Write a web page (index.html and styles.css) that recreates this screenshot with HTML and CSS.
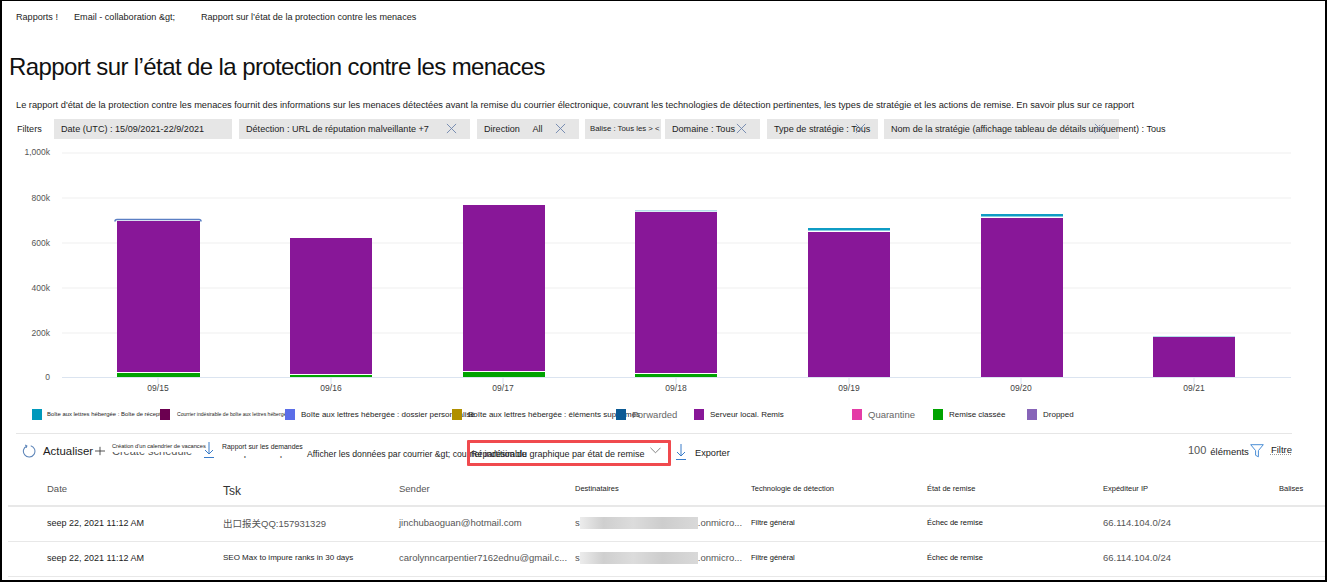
FILE: index.html
```html
<!DOCTYPE html>
<html lang="fr">
<head>
    <meta charset="UTF-8">
    <meta name="viewport" content="width=device-width, initial-scale=1.0">
    <title>Rapport sur l'état de la protection contre les menaces</title>
    <link rel="stylesheet" href="styles.css">
</head>
<body>
<div class="page">

    <div class="crumbs">
        <span class="crumb-a">Rapports !</span>
        <span class="crumb-b">Email - collaboration &amp;gt;</span>
        <span>Rapport sur l’état de la protection contre les menaces</span>
    </div>

    <h1 class="title">Rapport sur l’état de la protection contre les menaces</h1>

    <p class="intro">Le rapport d'état de la protection contre les menaces fournit des informations sur les menaces détectées avant la remise du courrier électronique, couvrant les technologies de détection pertinentes, les types de stratégie et les actions de remise. En savoir plus sur ce rapport</p>

    <div class="filters">
        <span class="filters-label">Filters</span>
        <div class="chip chip-date">Date (UTC) : 15/09/2021-22/9/2021</div>
        <div class="chip chip-detect">Détection : URL de réputation malveillante +7
            <svg class="x x-detect" viewBox="0 0 12 12"><path d="M1 1l10 10M11 1L1 11"/></svg></div>
        <div class="chip chip-dir">Direction <span class="dir-all">All</span>
            <svg class="x x-dir" viewBox="0 0 12 12"><path d="M1 1l10 10M11 1L1 11"/></svg></div>
        <div class="chip chip-tag">Balise : Tous les &gt; &lt;</div>
        <div class="chip chip-domain">Domaine : Tous
            <svg class="x x-domain" viewBox="0 0 12 12"><path d="M1 1l10 10M11 1L1 11"/></svg></div>
        <div class="chip chip-type">Type de stratégie : Tous
            <svg class="x x-type" viewBox="0 0 12 12"><path d="M1 1l10 10M11 1L1 11"/></svg></div>
        <div class="chip chip-name">Nom de la stratégie (affichage tableau de détails uniquement) : Tous
            <svg class="x x-name" viewBox="0 0 12 12"><path d="M1 1l10 10M11 1L1 11"/></svg></div>
    </div>

    <svg class="chart" viewBox="0 144 1327 254" width="1327" height="254">
        <g class="grid">
            <path d="M62 153H1291M62 198H1291M62 243H1291M62 288H1291M62 333H1291"/>
        </g>
        <path class="axis" d="M62 377.5H1291M158 378v6M331 378v6M503 378v6M676 378v6M849 378v6M1021 378v6M1194 378v6"/>

        <g class="ylabels">
            <text x="50" y="155">1,000k</text>
            <text x="50" y="201">800k</text>
            <text x="50" y="246">600k</text>
            <text x="50" y="291">400k</text>
            <text x="50" y="336">200k</text>
            <text x="50" y="380">0</text>
        </g>

        <!-- 09/15 -->
        <rect class="purple" x="117" y="221" width="83" height="151"/>
        <rect class="green" x="117" y="373" width="83" height="4"/>
        <path class="blue-cap" d="M115 221.5q0-2 2-2H199q2 0 2 2"/>
        <!-- 09/16 -->
        <rect class="purple" x="290" y="238" width="82" height="136"/>
        <rect class="green" x="290" y="375" width="82" height="2"/>
        <!-- 09/17 -->
        <rect class="purple" x="463" y="205" width="82" height="166"/>
        <rect class="green" x="463" y="372" width="82" height="5"/>
        <!-- 09/18 -->
        <rect class="pale" x="635" y="210" width="82" height="1.5"/>
        <rect class="purple" x="635" y="212" width="82" height="161"/>
        <rect class="green" x="635" y="374" width="82" height="3"/>
        <!-- 09/19 -->
        <rect class="teal" x="808" y="228" width="82" height="2.5"/>
        <rect class="purple" x="808" y="232" width="82" height="145"/>
        <!-- 09/20 -->
        <rect class="teal" x="981" y="214" width="82" height="2.5"/>
        <rect class="purple" x="981" y="218" width="82" height="159"/>
        <!-- 09/21 -->
        <rect class="pale" x="1153" y="336" width="82" height="1"/>
        <rect class="purple" x="1153" y="337" width="82" height="40"/>

        <g class="xlabels">
            <text x="158" y="391">09/15</text>
            <text x="331" y="391">09/16</text>
            <text x="503" y="391">09/17</text>
            <text x="676" y="391">09/18</text>
            <text x="849" y="391">09/19</text>
            <text x="1021" y="391">09/20</text>
            <text x="1194" y="391">09/21</text>
        </g>
    </svg>

    <div class="legend">
        <div class="leg"><i class="sw c1"></i><span class="tiny">Boîte aux lettres hébergée : Boîte de réception</span></div>
        <div class="leg"><i class="sw c2"></i><span class="tinier">Courrier indésirable de boîte aux lettres hébergée</span></div>
        <div class="leg"><i class="sw c3"></i><span class="mid">Boîte aux lettres hébergée : dossier personnalisé</span></div>
        <div class="leg"><i class="sw c4"></i><span class="mid">Boîte aux lettres hébergée : éléments supprimés</span></div>
        <div class="leg"><i class="sw c5"></i><span class="grey">Forwarded</span></div>
        <div class="leg"><i class="sw c6"></i><span class="mid">Serveur local. Remis</span></div>
        <div class="leg"><i class="sw c7"></i><span class="grey">Quarantine</span></div>
        <div class="leg"><i class="sw c8"></i><span class="mid">Remise classée</span></div>
        <div class="leg"><i class="sw c9"></i><span class="mid">Dropped</span></div>
    </div>

    <div class="toolbar">
        <div class="tool tool-refresh">
            <svg class="ico-refresh" viewBox="0 0 16 16"><path d="M5.5 2.2A6.6 6.6 0 1 0 10 1.9M3.6 1.2l2 1.1-.9 2.1"/></svg>
            <span>Actualiser</span>
        </div>
        <div class="tool tool-plus">
            <svg class="ico-plus" viewBox="0 0 12 12"><path d="M6 1v10M0 6h12"/></svg>
        </div>
        <div class="tool tool-sched">
            <span class="under">Create schedule</span>
            <span class="over">Création d'un calendrier de vacances</span>
        </div>
        <div class="tool tool-req">
            <svg class="ico-down" viewBox="0 0 10 16"><path d="M5 0v12M1 8l4 4 4-4M0 15.5h10"/></svg>
            <span class="under under-req">Request report</span>
            <span class="over over-req">Rapport sur les demandes</span>
        </div>
        <div class="tool tool-view">Afficher les données par courrier &amp;gt; courrier indésirable</div>
        <div class="breakdown">
            <span>Répartition du graphique par état de remise</span>
            <svg class="ico-chev" viewBox="0 0 12 7"><path d="M.5.5L6 6l5.5-5.5"/></svg>
        </div>
        <div class="tool tool-export">
            <svg class="ico-down" viewBox="0 0 10 16"><path d="M5 0v12M1 8l4 4 4-4M0 15.5h10"/></svg>
            <span>Exporter</span>
        </div>
        <div class="tool-right">
            <span class="count">100</span>
            <span class="count-label">éléments</span>
            <svg class="ico-funnel" viewBox="0 0 14 14"><path d="M.7.7h12.6L8.4 6.6v6.2l-2.8-1.5V6.6z"/></svg>
            <span class="filter-word">Filtre</span>
        </div>
    </div>

    <div class="table">
        <div class="row head">
            <div class="h-soft">Date</div>
            <div class="h-big">Tsk</div>
            <div class="h-soft">Sender</div>
            <div class="h-small">Destinataires</div>
            <div class="h-small">Technologie de détection</div>
            <div class="h-small">État de remise</div>
            <div class="h-small">Expéditeur IP</div>
            <div class="h-small">Balises</div>
        </div>
        <div class="row">
            <div>seep 22, 2021 11:12 AM</div>
            <div class="soft">出口报关QQ:157931329</div>
            <div class="soft">jinchubaoguan@hotmail.com</div>
            <div class="recip">s<span class="smudge"></span><span>.onmicro...</span></div>
            <div class="small">Filtre général</div>
            <div class="small">Échec de remise</div>
            <div class="soft">66.114.104.0/24</div>
            <div></div>
        </div>
        <div class="row">
            <div>seep 22, 2021 11:12 AM</div>
            <div class="subject">SEO Max to impure ranks in 30 days</div>
            <div class="soft">carolynncarpentier7162ednu@gmail.c...</div>
            <div class="recip">s<span class="smudge"></span><span>.onmicro...</span></div>
            <div class="small">Filtre général</div>
            <div class="small">Échec de remise</div>
            <div class="soft">66.114.104.0/24</div>
            <div></div>
        </div>
    </div>

</div>
</body>
</html>
```

FILE: styles.css
```css
body {
    margin: 0;
    background-color: #fff;
    font-family: "Liberation Sans", Arial, "Noto Sans CJK SC", sans-serif;
    color: #1c1c1c;
}

.page {
    box-sizing: border-box;
    width: 1327px;
    height: 582px;
    border: 1px solid #000;
    border-right-width: 2px;
    border-bottom-width: 2px;
    border-left-width: 2px;
    overflow: hidden;
}

/* breadcrumb */
.crumbs {
    display: flex;
    height: 32px;
    align-items: center;
    padding-left: 14px;
    font-size: 9.1px;
    white-space: nowrap;
}

.crumb-a { width: 58px; }
.crumb-b { width: 127px; }

.title {
    margin: 18px 0 0 7px;
    font-size: 24px;
    line-height: 32px;
    font-weight: normal;
    letter-spacing: -0.6px;
    color: #111;
}

.intro {
    margin: 15px 0 0 14px;
    font-size: 9.25px;
    line-height: 14px;
    white-space: nowrap;
}

/* filter chips */
.filters {
    display: flex;
    margin-top: 7px;
    height: 20px;
    font-size: 9.1px;
    line-height: 20px;
    white-space: nowrap;
}

.filters-label {
    width: 37px;
    padding-left: 15px;
}

.chip {
    position: relative;
    box-sizing: border-box;
    height: 20px;
    padding-left: 7px;
    background-color: #e6e6e6;
}

.chip-date { width: 178px; margin-right: 7px; }
.chip-detect { width: 231px; margin-right: 7px; }
.chip-dir { width: 102px; margin-right: 6px; }
.chip-tag { width: 76px; margin-right: 4px; font-size: 7.8px; padding-left: 5px; }
.chip-domain { width: 95px; margin-right: 7px; }
.chip-type { width: 111px; margin-right: 6px; }
.chip-name { width: 235px; }

.dir-all { margin-left: 10px; }

.x {
    position: absolute;
    top: 4px;
    width: 11px;
    height: 11px;
}

.x path {
    fill: none;
    stroke: #6f86ad;
    stroke-width: 1;
}

.x-detect { left: 207px; }
.x-dir { left: 78px; }
.x-domain { left: 71px; }
.x-type { left: 88px; }
.x-name { left: 210px; }

/* chart */
.chart {
    display: block;
    margin: 5px 0 0 -2px;
}

.grid path {
    fill: none;
    stroke: #efefef;
    stroke-width: 1;
}

.axis {
    fill: none;
    stroke: #dbe4f0;
    stroke-width: 1;
}

.ylabels text {
    font-size: 8.5px;
    fill: #555;
    text-anchor: end;
}

.xlabels text {
    font-size: 8.5px;
    fill: #444;
    text-anchor: middle;
}

.purple { fill: #881798; }
.green { fill: #00a300; }
.teal { fill: #0f9cc4; }
.pale { fill: #b5dfe9; }

.blue-cap {
    fill: none;
    stroke: #5b7fc4;
    stroke-width: 1.6;
}

/* legend */
.legend {
    display: grid;
    grid-template-columns: 128px 125px 167px 164px 78px 158px 81px 94px 100px;
    margin: 10px 0 0 30px;
    height: 12px;
    white-space: nowrap;
}

.leg {
    display: flex;
    align-items: center;
    height: 12px;
}

.sw {
    flex: none;
    width: 10px;
    height: 11px;
    margin-right: 6px;
}

.c1 { background-color: #0099bc; }
.c2 { background-color: #6b0050; }
.c3 { background-color: #5b6ee8; }
.c4 { background-color: #b08f00; }
.c5 { background-color: #0c5a94; }
.c6 { background-color: #881798; }
.c7 { background-color: #e43ba6; }
.c8 { background-color: #00a300; }
.c9 { background-color: #8764b8; }

.tiny { font-size: 5.9px; margin-left: -1px; }
.tinier { font-size: 5.1px; margin-left: 1px; }
.mid { font-size: 8px; }
.grey { font-size: 9.5px; color: #666; }

/* toolbar */
.toolbar {
    display: flex;
    height: 42px;
    margin: 13px 33px 0 14px;
    border-top: 1px solid #e6e6e6;
    white-space: nowrap;
    font-size: 10px;
}

.tool {
    position: relative;
    flex: none;
}

.tool-refresh {
    display: flex;
    width: 79px;
    padding-left: 6px;
    box-sizing: border-box;
    padding-top: 10px;
    font-size: 11.4px;
    line-height: 14px;
}

.ico-refresh {
    flex: none;
    width: 14px;
    height: 14px;
    margin-right: 7px;
}

.ico-refresh path {
    fill: none;
    stroke: #5c84b8;
    stroke-width: 1.2;
}

.tool-plus { width: 17px; padding-top: 12px; }

.ico-plus {
    display: block;
    width: 10px;
    height: 10px;
}

.ico-plus path {
    fill: none;
    stroke: #333;
    stroke-width: 1;
}

.tool-sched,
.tool-req { height: 40px; }

.tool-sched { width: 92px; }

.under {
    position: absolute;
    top: 11px;
    left: 0;
    font-size: 11px;
    color: #555;
}

.over {
    position: absolute;
    top: 8px;
    left: 0;
    height: 10px;
    line-height: 9px;
    font-size: 5.7px;
    background-color: #fff;
}

.tool-req { width: 103px; }

.tool-req .ico-down {
    position: absolute;
    top: 8px;
    left: 0;
}

.under-req { left: 22px; top: 12px; }
.over-req { left: 18px; font-size: 6.9px; height: 14px; width: 85px; }

.ico-down {
    flex: none;
    width: 10px;
    height: 16px;
}

.ico-down path {
    fill: none;
    stroke: #3a7cc9;
    stroke-width: 1;
}

.tool-view {
    width: 160px;
    padding-top: 13px;
    font-size: 8.7px;
    line-height: 14px;
}

.breakdown {
    position: relative;
    box-sizing: border-box;
    flex: none;
    width: 204px;
    height: 26px;
    margin-top: 6px;
    padding: 4px 0 0 1px;
    border: 3px solid #f04a4e;
    border-radius: 1px;
    font-size: 9px;
    line-height: 14px;
}

.ico-chev {
    position: absolute;
    top: 4px;
    right: 7px;
    width: 11px;
    height: 7px;
}

.ico-chev path {
    fill: none;
    stroke: #7a7a7a;
    stroke-width: 1;
}

.tool-export {
    display: flex;
    margin-left: 5px;
    padding-top: 10px;
    font-size: 9.2px;
}

.tool-export .ico-down { margin-right: 9px; }
.tool-export span { padding-top: 4px; }

.tool-right {
    display: flex;
    margin-left: auto;
    padding-top: 9px;
    height: 16px;
}

.count { font-size: 11px; color: #555; margin-right: 4px; line-height: 15px; }
.count-label { font-size: 9.5px; line-height: 18px; }

.ico-funnel {
    width: 14px;
    height: 14px;
    margin: 1px 7px 0 1px;
}

.ico-funnel path {
    fill: none;
    stroke: #4a8ed6;
    stroke-width: 1;
}

.filter-word {
    font-size: 9.5px;
    line-height: 14px;
    text-decoration: underline dotted #999;
}

/* table */
.table {
    margin-left: 6px;
    font-size: 9px;
}

.row {
    display: grid;
    grid-template-columns: repeat(8, 176px);
    box-sizing: border-box;
    height: 35px;
    padding: 0 0 3px 39px;
    align-items: center;
    border-bottom: 1px solid #e8e8e8;
    white-space: nowrap;
}

.row.head {
    height: 31px;
    padding-bottom: 5px;
    border-bottom-width: 2px;
}

.h-soft { color: #555; font-size: 9.5px; }
.h-big { color: #333; font-size: 12px; padding-top: 5px; }
.h-small { font-size: 7.5px; color: #222; }

.soft { color: #555; font-size: 9.5px; }
.small { font-size: 7.5px; color: #111; }
.subject { font-size: 8px; }

.recip {
    display: flex;
    align-items: center;
    color: #555;
    font-size: 9.5px;
}

.smudge {
    flex: none;
    width: 118px;
    height: 12px;
    background: linear-gradient(90deg, #ececec, #cfcfcf 20%, #dcdcdc 45%, #cdcdcd 70%, #d9d9d9);
}
```
